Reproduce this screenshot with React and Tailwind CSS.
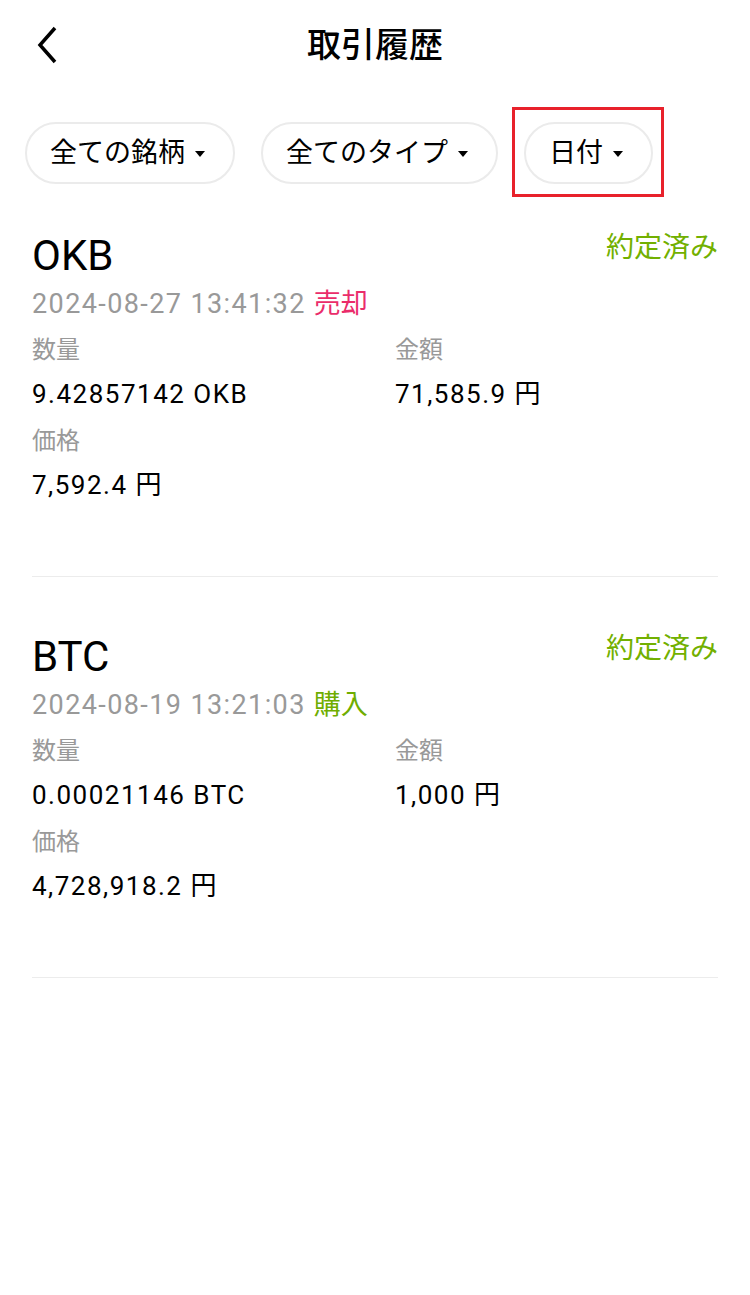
import React from "react";

const font = { fontFamily: "Roboto, 'Noto Sans CJK JP', sans-serif" };

const trades = [
  {
    symbol: "OKB",
    date: "2024-08-27 13:41:32",
    side: "売却",
    sell: true,
    qty: "9.42857142 OKB",
    amount: "71,585.9 円",
    price: "7,592.4 円",
  },
  {
    symbol: "BTC",
    date: "2024-08-19 13:21:03",
    side: "購入",
    sell: false,
    qty: "0.00021146 BTC",
    amount: "1,000 円",
    price: "4,728,918.2 円",
  },
];

const Caret = () => (
  <svg width="10" height="8" viewBox="0 0 10 8" className="ml-[10px] mt-[2px]">
    <path d="M0 1 L10 1 L5 7 Z" fill="#000" />
  </svg>
);

const Pill = ({ label }) => (
  <div className="flex h-[62px] items-center rounded-full border-2 border-[#ebebeb] pl-[23px] pr-[28px] text-[27px] text-black">
    <span>{label}</span>
    <Caret />
  </div>
);

const App = () => {
  return (
    <div className="min-h-[1295px] w-[750px] bg-white" style={font}>
      {/* Header */}
      <div className="relative flex h-[90px] items-center justify-center">
        <svg
          width="24"
          height="38"
          viewBox="0 0 24 38"
          className="absolute left-[35px] top-[26px]"
        >
          <path d="M20 2 L5 19 L20 36" fill="none" stroke="#000" strokeWidth="3.5" />
        </svg>
        <h1 className="text-[34px] font-medium text-black">取引履歴</h1>
      </div>

      {/* Filters */}
      <div className="mt-[32px] flex items-center gap-[26px] px-[25px]">
        <Pill label="全ての銘柄" />
        <Pill label="全てのタイプ" />
        <div className="relative">
          <Pill label="日付" />
          <div className="absolute -left-[12px] -top-[15px] h-[90px] w-[152px] border-[3px] border-[#e8212b]" />
        </div>
      </div>

      {/* Trades */}
      <div className="mt-[44px] px-[32px]">
        {trades.map((t) => (
          <div key={t.symbol} className="border-b border-[#ececec] pb-[74px] mb-[52px]">
            <div className="flex items-start justify-between">
              <div className="text-[42px] leading-[56px] text-black">{t.symbol}</div>
              <div className="pt-[2px] text-[28px] leading-[36px] text-[#72b000]">約定済み</div>
            </div>
            <div className="mt-[2px] text-[27px] leading-[36px] tracking-[1.4px] text-[#999]">
              {t.date}{" "}
              <span className={t.sell ? "tracking-normal text-[#ea2d6a]" : "tracking-normal text-[#6fad00]"}>
                {t.side}
              </span>
            </div>
            <div className="mt-[12px] grid grid-cols-[363px_1fr]">
              <div>
                <div className="text-[24px] leading-[32px] text-[#999]">数量</div>
                <div className="mt-[11px] text-[26px] leading-[34px] tracking-[1.5px] text-black">{t.qty}</div>
              </div>
              <div>
                <div className="text-[24px] leading-[32px] text-[#999]">金額</div>
                <div className="mt-[11px] text-[26px] leading-[34px] tracking-[1.5px] text-black">{t.amount}</div>
              </div>
            </div>
            <div className="mt-[14px] text-[24px] leading-[32px] text-[#999]">価格</div>
            <div className="mt-[11px] text-[26px] leading-[34px] tracking-[1.5px] text-black">{t.price}</div>
          </div>
        ))}
      </div>
    </div>
  );
};

export default App;
